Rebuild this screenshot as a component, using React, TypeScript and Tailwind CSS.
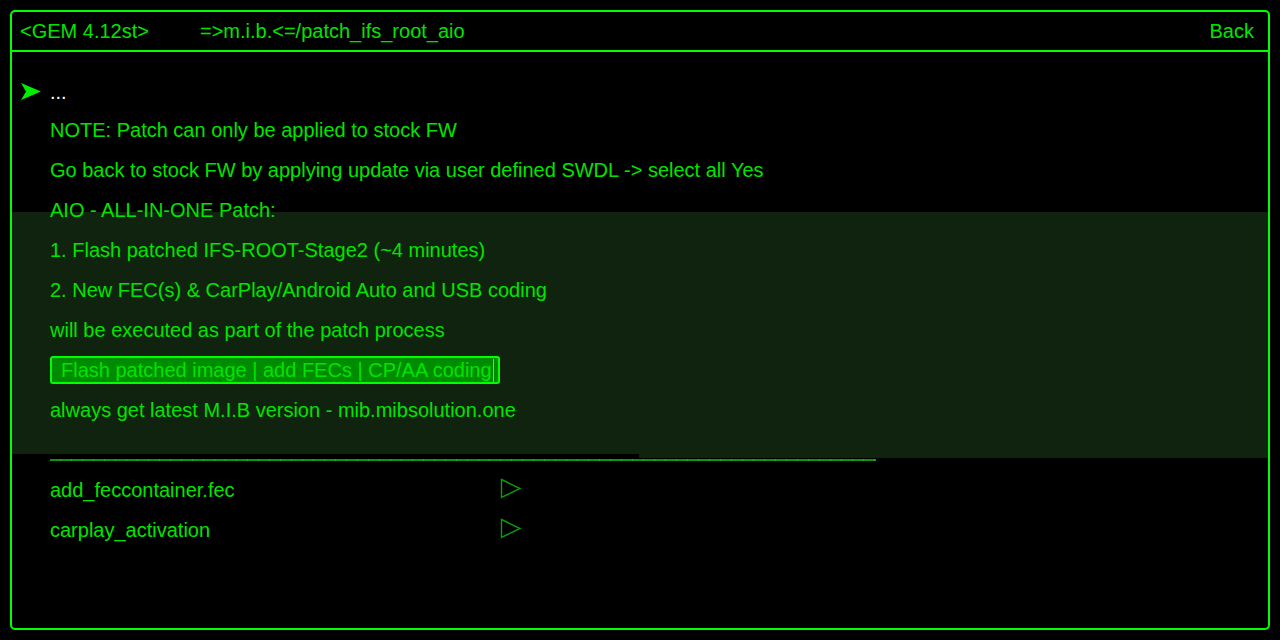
import React from "react";

const textGreen = "text-[#00e400]";

const Row: React.FC<{ children: React.ReactNode; className?: string }> = ({ children, className = "" }) => (
    <div className={`flex h-[40px] items-center pl-[38px] text-[20px] leading-[40px] ${textGreen} ${className}`}>
        {children}
    </div>
);

const Triangle: React.FC = () => (
    <svg width="22" height="21" viewBox="0 0 22 21" className="mt-[8px] self-start">
        <polygon points="1.5,1.5 20,10.5 1.5,19.5" fill="none" stroke="#0c9c0c" strokeWidth={1.4} />
    </svg>
);

const App: React.FC = () => {
    const files = ["add_feccontainer.fec", "carplay_activation"];

    return (
        <div className="h-[640px] w-[1280px] bg-black p-[10px] font-['Liberation_Sans',Arial,sans-serif]">
            <div className="flex h-full flex-col rounded-[5px] border-2 border-[#00ff00]">
                {/* Header */}
                <header className={`flex h-[40px] shrink-0 items-center border-b-2 border-[#00ff00] pl-2 pr-[14px] text-[20px] ${textGreen}`}>
                    <span className="w-[180px]">&lt;GEM 4.12st&gt;</span>
                    <span>=&gt;m.i.b.&lt;=/patch_ifs_root_aio</span>
                    <span className="ml-auto">Back</span>
                </header>

                <main className="pt-[18px]">
                    <div className="flex h-[40px] items-center text-[20px]">
                        <svg width="30" height="20" viewBox="0 0 30 20" className="ml-[8px] mt-[3px]">
                            <polygon points="1,1 21,9.5 1,18 6,9.5" fill="#00ee00" />
                        </svg>
                        <span className="mt-[3px] text-white">...</span>
                    </div>
                    <Row>NOTE: Patch can only be applied to stock FW</Row>
                    <Row>Go back to stock FW by applying update via user defined SWDL -&gt; select all Yes</Row>
                    <Row className="bg-[linear-gradient(to_bottom,transparent_22px,#10230f_22px)]">AIO - ALL-IN-ONE Patch:</Row>

                    {/* highlighted block */}
                    <div className="bg-[#10230f] pb-[24px]">
                        <Row>1. Flash patched IFS-ROOT-Stage2 (~4 minutes)</Row>
                        <Row>2. New FEC(s) &amp; CarPlay/Android Auto and USB coding</Row>
                        <Row>will be executed as part of the patch process</Row>
                        <Row>
                            <div className="flex h-[28px] w-[450px] items-center rounded-[3px] border-2 border-[#00ff00] bg-[#008c00] pl-[9px] leading-none">
                                <span>Flash patched image | add FECs | CP/AA coding</span>
                                <span className="ml-auto mr-[4px] h-[23px] w-px bg-[#33ff33]" />
                            </div>
                        </Row>
                        <Row>always get latest M.I.B version - mib.mibsolution.one</Row>
                    </div>
                    <div className="h-[4px] pl-[627px]">
                        <div className="h-full bg-[#10230f]" />
                    </div>

                    <div className="ml-[38px] mt-px h-[2px] w-[826px] bg-[repeating-linear-gradient(90deg,#0c960c_0,#0c960c_10px,#20b020_10px,#20b020_11px)]" />

                    <div className="mt-[9px]">
                        {files.map((f) => (
                            <Row key={f}>
                                <span className="w-[450px]">{f}</span>
                                <Triangle />
                            </Row>
                        ))}
                    </div>
                </main>
            </div>
        </div>
    );
};

export default App;
